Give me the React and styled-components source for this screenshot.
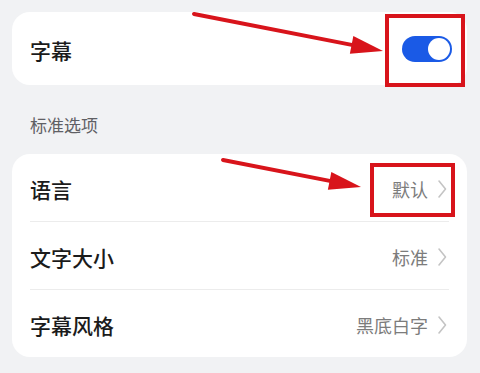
import React from 'react'
import styled, { createGlobalStyle } from 'styled-components'

const GlobalStyle = createGlobalStyle`
  html, body {
    margin: 0;
    padding: 0;
    background: #f1f2f4;
  }
  body {
    font-family: "Noto Sans CJK SC", "Noto Sans", sans-serif;
  }
`

const rows = [
  { label: '语言', value: '默认' },
  { label: '文字大小', value: '标准' },
  { label: '字幕风格', value: '黑底白字' },
]

function Chevron() {
  return (
    <svg width="10" height="20" viewBox="0 0 10 20">
      <path d="M2 2 L8.5 10 L2 18" fill="none" stroke="#c4c4c4" strokeWidth="1.6" strokeLinecap="round" strokeLinejoin="round" />
    </svg>
  )
}

function Arrow({ x1, y1, x2, y2 }) {
  const angle = Math.atan2(y2 - y1, x2 - x1)
  const len = 32
  const half = 9
  const bx = x2 - len * Math.cos(angle)
  const by = y2 - len * Math.sin(angle)
  const px = -Math.sin(angle) * half
  const py = Math.cos(angle) * half
  const lx = x2 - (len - 4) * Math.cos(angle)
  const ly = y2 - (len - 4) * Math.sin(angle)
  return (
    <g>
      <line x1={x1} y1={y1} x2={lx} y2={ly} stroke="#d8141b" strokeWidth="4" strokeLinecap="round" />
      <polygon points={`${x2},${y2} ${bx + px},${by + py} ${bx - px},${by - py}`} fill="#d8141b" />
    </g>
  )
}

function App() {
  return (
    <>
      <GlobalStyle />
      <Page>
        <Card>
          <SwitchRow>
            <Title>字幕</Title>
            <Toggle>
              <Knob />
            </Toggle>
          </SwitchRow>
        </Card>
        <SectionLabel>标准选项</SectionLabel>
        <Card>
          {rows.map((r, i) => (
            <Row key={r.label} $last={i === rows.length - 1}>
              <Title>{r.label}</Title>
              <Value>
                {r.value}
                <Chevron />
              </Value>
            </Row>
          ))}
        </Card>
        <Marks width="480" height="373" viewBox="0 0 480 373">
          <rect x="387" y="16" width="76" height="69" fill="none" stroke="#d8141b" strokeWidth="4" />
          <rect x="372" y="165" width="81" height="50" fill="none" stroke="#d8141b" strokeWidth="4" />
          <Arrow x1={194} y1={14} x2={383} y2={51} />
          <Arrow x1={223} y1={160} x2={361} y2={187} />
        </Marks>
      </Page>
    </>
  )
}

export default App

const Page = styled.div`
  position: relative;
  width: 480px;
  height: 373px;
  box-sizing: border-box;
  padding: 12px 13px 0 12px;
  overflow: hidden;
`

const Card = styled.div`
  background: #ffffff;
  border-radius: 18px;
  padding: 0 18px;
`

const SwitchRow = styled.div`
  height: 73px;
  display: flex;
  align-items: center;
  justify-content: space-between;
  margin-right: -3px;
`

const Title = styled.span`
  font-size: 21px;
  font-weight: 500;
  color: #1b1b1b;
  line-height: 1;
  padding-top: 3px;
`

const Toggle = styled.div`
  width: 50px;
  height: 26px;
  border-radius: 13px;
  background: #1a5ae6;
  display: flex;
  align-items: center;
  justify-content: flex-end;
  padding: 0 2px;
  box-sizing: border-box;
`

const Knob = styled.div`
  width: 22px;
  height: 22px;
  border-radius: 50%;
  background: #ffffff;
`

const SectionLabel = styled.div`
  font-size: 17px;
  color: #5f6064;
  padding: 31px 0 0 18px;
  height: 38px;
  line-height: 1;
`

const Row = styled.div`
  height: 67px;
  display: flex;
  align-items: center;
  justify-content: space-between;
  border-bottom: ${(p) => (p.$last ? 'none' : '1px solid #ececec')};
  padding-right: 2px;
`

const Value = styled.span`
  display: flex;
  align-items: center;
  gap: 9px;
  font-size: 18px;
  color: #7c7c7c;
  padding-top: 3px;
`

const Marks = styled.svg`
  position: absolute;
  left: 0;
  top: 0;
  pointer-events: none;
`
